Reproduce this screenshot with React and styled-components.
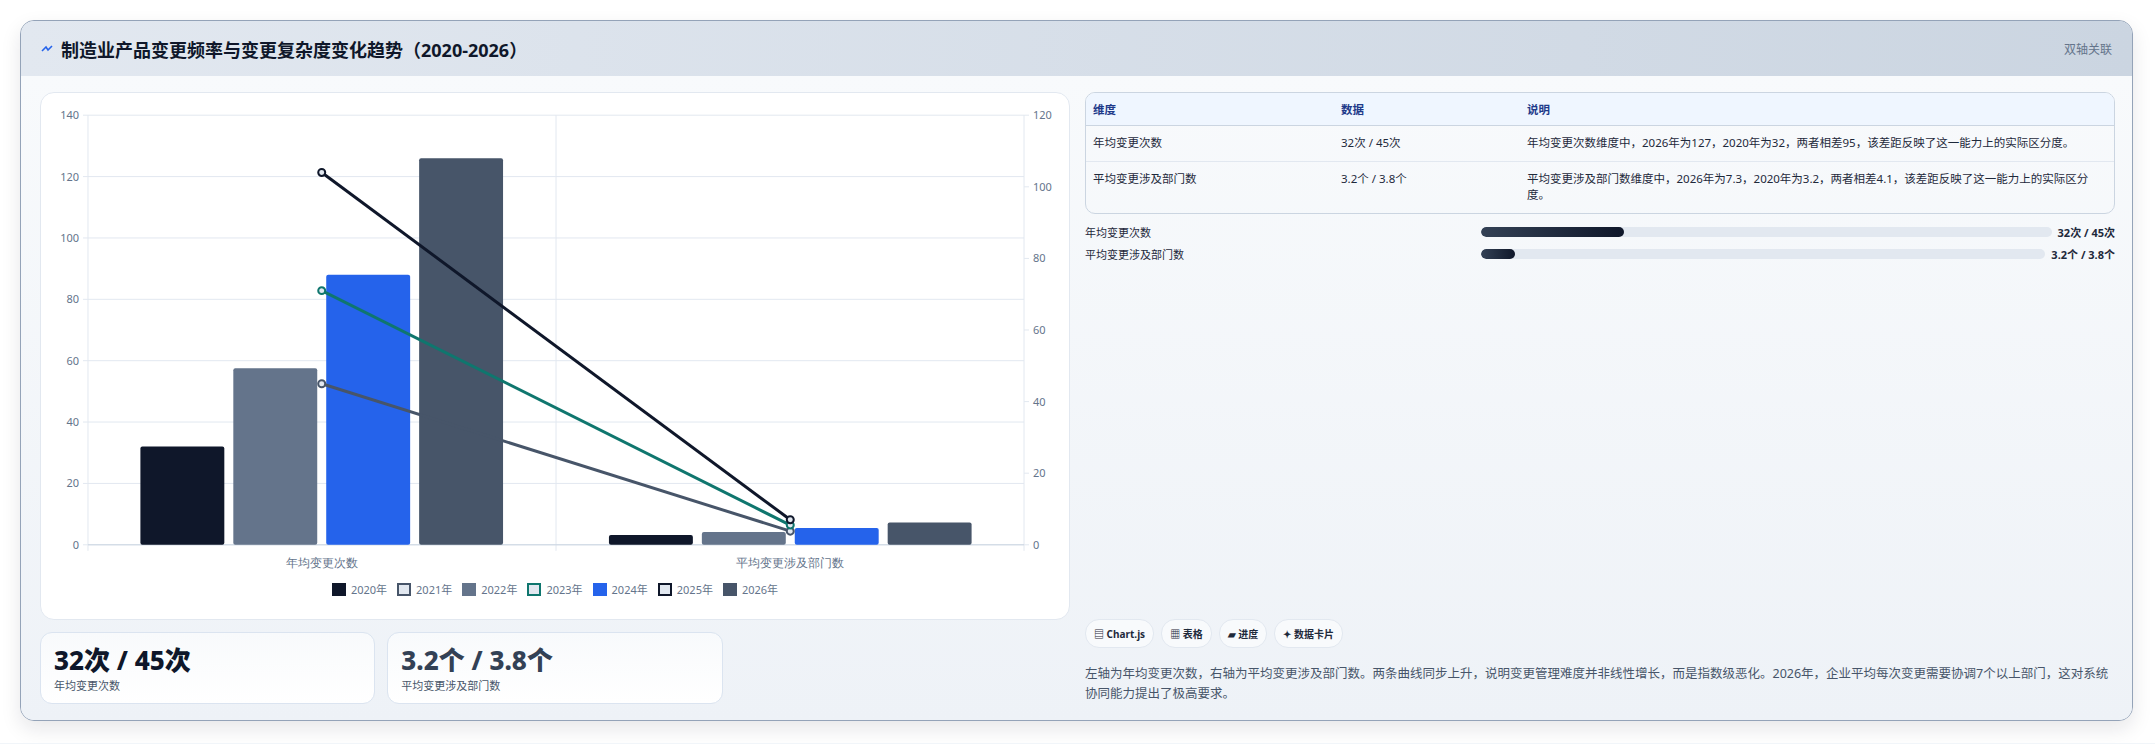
import React from "react";
import styled, { createGlobalStyle } from "styled-components";

const GlobalStyle = createGlobalStyle`
  body {
    margin: 0;
    background: #f1f5f9;
    font-family: "Noto Sans", "Noto Sans CJK SC", sans-serif;
  }
`;

const Page = styled.div`
  padding: 20px 22px 22px 20px;
  background: #fff;
`;

const Panel = styled.div`
  border: 1px solid #94a3b8;
  border-radius: 14px;
  background: #f1f5f9;
  box-shadow: 0 8px 20px rgba(15, 23, 42, 0.1);
  overflow: hidden;
`;

const Header = styled.div`
  height: 55px;
  display: flex;
  align-items: center;
  justify-content: space-between;
  padding: 0 20px 0 20px;
  background: linear-gradient(90deg, #e2e8f0, #cbd5e1);
`;

const Title = styled.h2`
  margin: 0;
  font-size: 18px;
  font-weight: 700;
  color: #0f172a;
  display: flex;
  align-items: center;
  gap: 8px;
`;

const Tag = styled.span`
  font-size: 12px;
  color: #64748b;
`;

const Body = styled.div`
  display: grid;
  grid-template-columns: 1fr 1fr;
  gap: 15px;
  padding: 16px 17px 16px 19px;
  background: linear-gradient(180deg, #f8fafc, #eef2f7);
`;

const Column = styled.div`
  display: flex;
  flex-direction: column;
  gap: 12px;
`;

const ChartCard = styled.div`
  background: #fff;
  border: 1px solid #e2e8f0;
  border-radius: 14px;
  height: 526px;
  display: flex;
  flex-direction: column;
`;

const Legend = styled.div`
  display: flex;
  justify-content: center;
  gap: 10px;
  margin-top: 6px;
`;

const LegendItem = styled.span`
  display: flex;
  align-items: center;
  gap: 5px;
  font-size: 11px;
  color: #64748b;
`;

const Swatch = styled.i`
  width: ${(p) => (p.$outline ? 10 : 14)}px;
  height: ${(p) => (p.$outline ? 9 : 13)}px;
  background: ${(p) => (p.$outline ? "#e2e8f0" : p.$color)};
  border: ${(p) => (p.$outline ? `2px solid ${p.$color}` : "none")};
`;

const Stats = styled.div`
  display: grid;
  grid-template-columns: repeat(3, 1fr);
  gap: 12px;
`;

const StatCard = styled.div`
  height: 72px;
  box-sizing: border-box;
  padding: 10px 13px;
  background: linear-gradient(180deg, #f8fafc, #fff);
  border: 1px solid #dbe4f0;
  border-radius: 12px;
`;

const StatValue = styled.div`
  font-size: 26px;
  font-weight: 800;
  line-height: 34px;
  color: ${(p) => p.$color};
`;

const StatLabel = styled.div`
  font-size: 11px;
  color: #475569;
`;

const Table = styled.table`
  width: 100%;
  border-collapse: separate;
  border-spacing: 0;
  border: 1px solid #cbd5e1;
  border-radius: 10px;
  overflow: hidden;
  font-size: 11.5px;
  color: #1e293b;
`;

const Th = styled.th`
  text-align: left;
  font-weight: 700;
  color: #1e3a8a;
  background: #eff6ff;
  height: 32px;
  padding: 0 7px;
  border-bottom: 1px solid #cbd5e1;
  width: ${(p) => p.$w || "auto"};
`;

const Td = styled.td`
  padding: 9px 7px;
  line-height: 1.45;
  vertical-align: top;
  border-bottom: ${(p) => (p.$last ? "none" : "1px solid #e2e8f0")};
`;

const ProgressList = styled.div`
  display: flex;
  flex-direction: column;
  gap: 6px;
  margin-top: -2px;
`;

const ProgressRow = styled.div`
  display: flex;
  align-items: center;
  font-size: 11px;
  color: #1e293b;
`;

const ProgressLabel = styled.span`
  width: 396px;
  flex: none;
`;

const Track = styled.div`
  flex: 1;
  height: 10px;
  border-radius: 5px;
  background: #e2e8f0;
  margin-right: 6px;
  overflow: hidden;
`;

const Fill = styled.div`
  height: 100%;
  border-radius: 5px;
  background: linear-gradient(90deg, #334155, #0f172a);
`;

const ProgressValue = styled.b`
  font-weight: 700;
`;

const Chips = styled.div`
  margin-top: auto;
  display: flex;
  gap: 7px;
`;

const Chip = styled.span`
  font-size: 10px;
  font-weight: 700;
  color: #1e293b;
  background: #f8fafc;
  border: 1px solid #e2e8f0;
  border-radius: 14px;
  padding: 6px 8px;
`;

const Note = styled.p`
  margin: 4px 0 0;
  font-size: 12.5px;
  line-height: 1.6;
  color: #475569;
`;

const bars = [
  { name: "2020年", color: "#0f172a", v: [32, 3.2] },
  { name: "2022年", color: "#64748b", v: [57.5, 4.2] },
  { name: "2024年", color: "#2563eb", v: [88, 5.5] },
  { name: "2026年", color: "#475569", v: [126, 7.3] },
];
const lines = [
  { color: "#475569", v: [45, 3.8] },
  { color: "#0f766e", v: [71, 5.5] },
  { color: "#0f172a", v: [104, 7] },
];
const legend = [
  ["2020年", "#0f172a"],
  ["2021年", "#475569", true],
  ["2022年", "#64748b"],
  ["2023年", "#0f766e", true],
  ["2024年", "#2563eb"],
  ["2025年", "#0f172a", true],
  ["2026年", "#475569"],
];

const X0 = 47, X1 = 984, Y0 = 22, Y1 = 452;
const yl = (v) => Y1 - (v / 140) * (Y1 - Y0);
const yr = (v) => Y1 - (v / 120) * (Y1 - Y0);
const centers = [281, 750];
const tickText = { fontSize: 11, fill: "#64748b", fontFamily: "Noto Sans, sans-serif" };

const Chart = () => (
  <svg viewBox="0 0 1029 482" width="100%" height="482">
    {[0, 20, 40, 60, 80, 100, 120, 140].map((t) => (
      <g key={t}>
        <line x1={X0 - 5} x2={X1} y1={yl(t)} y2={yl(t)} stroke="#e2e8f0" />
        <text x={X0 - 9} y={yl(t) + 4} textAnchor="end" style={tickText}>{t}</text>
      </g>
    ))}
    {[0, 20, 40, 60, 80, 100, 120].map((t) => (
      <g key={t}>
        <line x1={X1} x2={X1 + 5} y1={yr(t)} y2={yr(t)} stroke="#e2e8f0" />
        <text x={X1 + 9} y={yr(t) + 4} style={tickText}>{t}</text>
      </g>
    ))}
    {[X0, 515.5, X1].map((x) => (
      <line key={x} x1={x} x2={x} y1={Y0} y2={Y1 + 6} stroke="#e2e8f0" />
    ))}
    <line x1={X0} x2={X1} y1={Y1} y2={Y1} stroke="#cbd5e1" />
    {centers.map((c, g) =>
      bars.map((b, i) => {
        const x = c + (i - 1.5) * 93 - 42;
        return (
          <rect key={g + b.name} x={x} y={yl(b.v[g])} width={84} height={Y1 - yl(b.v[g])} fill={b.color} rx={2} />
        );
      })
    )}
    {lines.map((l, i) => (
      <g key={i}>
        <line x1={centers[0]} y1={yr(l.v[0])} x2={centers[1]} y2={yr(l.v[1])} stroke={l.color} strokeWidth={3} />
        {centers.map((c, g) => (
          <circle key={g} cx={c} cy={yr(l.v[g])} r={3.5} fill="#e2e8f0" stroke={l.color} strokeWidth={2} />
        ))}
      </g>
    ))}
    <text x={centers[0]} y={474} textAnchor="middle" style={{ ...tickText, fontSize: 12 }}>年均变更次数</text>
    <text x={centers[1]} y={474} textAnchor="middle" style={{ ...tickText, fontSize: 12 }}>平均变更涉及部门数</text>
  </svg>
);

export default function App() {
  return (
    <Page>
      <GlobalStyle />
      <Panel>
        <Header>
          <Title>
            <svg width="12" height="12" viewBox="0 0 12 12">
              <path d="M1 8 L5 4 L7 7 L11 3" stroke="#2563eb" strokeWidth="1.6" fill="none" />
            </svg>
            制造业产品变更频率与变更复杂度变化趋势（2020-2026）
          </Title>
          <Tag>双轴关联</Tag>
        </Header>
        <Body>
          <Column>
            <ChartCard>
              <Chart />
              <Legend>
                {legend.map(([n, c, o]) => (
                  <LegendItem key={n}>
                    <Swatch $color={c} $outline={o} />
                    {n}
                  </LegendItem>
                ))}
              </Legend>
            </ChartCard>
            <Stats>
              <StatCard>
                <StatValue $color="#0f172a">32次 / 45次</StatValue>
                <StatLabel>年均变更次数</StatLabel>
              </StatCard>
              <StatCard>
                <StatValue $color="#334155">3.2个 / 3.8个</StatValue>
                <StatLabel>平均变更涉及部门数</StatLabel>
              </StatCard>
            </Stats>
          </Column>
          <Column>
            <Table>
              <thead>
                <tr>
                  <Th $w="234px">维度</Th>
                  <Th $w="172px">数据</Th>
                  <Th>说明</Th>
                </tr>
              </thead>
              <tbody>
                <tr>
                  <Td>年均变更次数</Td>
                  <Td>32次 / 45次</Td>
                  <Td>年均变更次数维度中，2026年为127，2020年为32，两者相差95，该差距反映了这一能力上的实际区分度。</Td>
                </tr>
                <tr>
                  <Td $last>平均变更涉及部门数</Td>
                  <Td $last>3.2个 / 3.8个</Td>
                  <Td $last>平均变更涉及部门数维度中，2026年为7.3，2020年为3.2，两者相差4.1，该差距反映了这一能力上的实际区分度。</Td>
                </tr>
              </tbody>
            </Table>
            <ProgressList>
              <ProgressRow>
                <ProgressLabel>年均变更次数</ProgressLabel>
                <Track><Fill style={{ width: "25%" }} /></Track>
                <ProgressValue>32次 / 45次</ProgressValue>
              </ProgressRow>
              <ProgressRow>
                <ProgressLabel>平均变更涉及部门数</ProgressLabel>
                <Track><Fill style={{ width: "6%" }} /></Track>
                <ProgressValue>3.2个 / 3.8个</ProgressValue>
              </ProgressRow>
            </ProgressList>
            <Chips>
              <Chip>▤ Chart.js</Chip>
              <Chip>▦ 表格</Chip>
              <Chip>▰ 进度</Chip>
              <Chip>✦ 数据卡片</Chip>
            </Chips>
            <Note>
              左轴为年均变更次数，右轴为平均变更涉及部门数。两条曲线同步上升，说明变更管理难度并非线性增长，而是指数级恶化。2026年，企业平均每次变更需要协调7个以上部门，这对系统协同能力提出了极高要求。
            </Note>
          </Column>
        </Body>
      </Panel>
    </Page>
  );
}
